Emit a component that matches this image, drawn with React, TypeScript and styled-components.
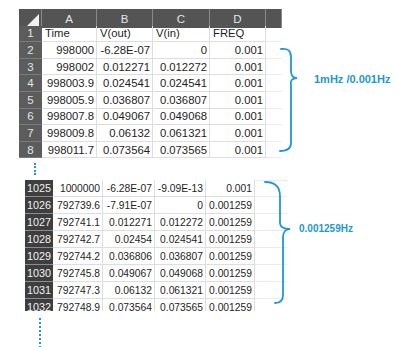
import styled, { createGlobalStyle } from 'styled-components'

const GlobalStyle = createGlobalStyle`
  html, body {
    margin: 0;
    background: #ffffff;
  }
  body {
    font-family: "Liberation Sans", Arial, sans-serif;
  }
`

const ACCENT = '#2196d8'

type Row = { n: string; cells: string[] }

const firstRows: Row[] = [
  { n: '2', cells: ['998000', '-6.28E-07', '0', '0.001'] },
  { n: '3', cells: ['998002', '0.012271', '0.012272', '0.001'] },
  { n: '4', cells: ['998003.9', '0.024541', '0.024541', '0.001'] },
  { n: '5', cells: ['998005.9', '0.036807', '0.036807', '0.001'] },
  { n: '6', cells: ['998007.8', '0.049067', '0.049068', '0.001'] },
  { n: '7', cells: ['998009.8', '0.06132', '0.061321', '0.001'] },
  { n: '8', cells: ['998011.7', '0.073564', '0.073565', '0.001'] },
]

const secondRows: Row[] = [
  { n: '1025', cells: ['1000000', '-6.28E-07', '-9.09E-13', '0.001'] },
  { n: '1026', cells: ['792739.6', '-7.91E-07', '0', '0.001259'] },
  { n: '1027', cells: ['792741.1', '0.012271', '0.012272', '0.001259'] },
  { n: '1028', cells: ['792742.7', '0.02454', '0.024541', '0.001259'] },
  { n: '1029', cells: ['792744.2', '0.036806', '0.036807', '0.001259'] },
  { n: '1030', cells: ['792745.8', '0.049067', '0.049068', '0.001259'] },
  { n: '1031', cells: ['792747.3', '0.06132', '0.061321', '0.001259'] },
  { n: '1032', cells: ['792748.9', '0.073564', '0.073565', '0.001259'] },
]

const Page = styled.main`
  padding-top: 9px;
  width: 399px;
  height: 347px;
  box-sizing: border-box;
  overflow: hidden;
`

const Block = styled.section<{ $indent: number; $top?: number }>`
  display: flex;
  align-items: flex-start;
  padding-left: ${(p) => p.$indent}px;
  margin-top: ${(p) => p.$top ?? 0}px;
`

const Sheet = styled.div<{ $cols: string; $rows: string; $height: number; $size: number }>`
  display: grid;
  grid-template-columns: ${(p) => p.$cols};
  grid-auto-rows: ${(p) => p.$rows};
  height: ${(p) => p.$height}px;
  overflow: hidden;
  font-size: ${(p) => p.$size}px;
  color: #1e1e1e;
`

const ColHead = styled.div`
  background: #545454;
  color: #e6e6e6;
  display: flex;
  align-items: center;
  justify-content: center;
  border-right: 1px solid #8a8a8a;
  font-size: 11.5px;
  height: 19px;
  &:last-child {
    border-right: none;
  }
`

const Corner = styled.div`
  background: #545454;
  height: 19px;
  border-right: 1px solid #8a8a8a;
  display: flex;
  align-items: flex-end;
  justify-content: flex-end;
  padding: 0 2px 2px 0;
  box-sizing: border-box;
`

const Triangle = styled.div`
  width: 0;
  height: 0;
  border-left: 12px solid transparent;
  border-bottom: 12px solid #f2f2f2;
`

const RowHead = styled.div<{ $dark?: boolean }>`
  background: ${(p) => (p.$dark ? '#3e3e3e' : '#5c5c5c')};
  color: ${(p) => (p.$dark ? '#f2f2f2' : '#e4e4e4')};
  display: flex;
  align-items: center;
  justify-content: center;
  border-bottom: 1px solid ${(p) => (p.$dark ? '#8c8c8c' : '#7a7a7a')};
  font-size: ${(p) => (p.$dark ? '10.8px' : '11.5px')};
`

const Cell = styled.div<{ $num?: boolean }>`
  display: flex;
  align-items: center;
  justify-content: ${(p) => (p.$num ? 'flex-end' : 'flex-start')};
  padding: 0 2px 0 3px;
  border-right: 1px solid #dedede;
  border-bottom: 1px solid #dedede;
  white-space: nowrap;
  overflow: hidden;
`

const Blank = styled.div<{ $top?: boolean }>`
  border-bottom: 1px solid #ececec;
  border-top: ${(p) => (p.$top ? '1px solid #ececec' : 'none')};
`

const Note = styled.div<{ $shift: number; $top: number }>`
  display: flex;
  align-items: flex-start;
  margin-left: ${(p) => p.$shift}px;
  margin-top: ${(p) => p.$top}px;
`

const Label = styled.span<{ $size: number; $top: number; $gap: number }>`
  color: ${ACCENT};
  font-weight: bold;
  font-size: ${(p) => p.$size}px;
  margin-top: ${(p) => p.$top}px;
  margin-left: ${(p) => p.$gap}px;
  white-space: nowrap;
`

const Dots = styled.div<{ $indent: number; $height: number; $top: number }>`
  margin-left: ${(p) => p.$indent}px;
  margin-top: ${(p) => p.$top}px;
  height: ${(p) => p.$height}px;
  border-left: 2px dotted ${ACCENT};
  width: 0;
`

function FirstBrace() {
  return (
    <svg width="22" height="106" viewBox="0 0 22 106" fill="none">
      <path
        d="M3 2 C10 1 13 4 13 10 L13 24 C13 28 14 31 19 31 C14 31 12 34 13 38 L13 96 C13 102 9 104 2 104"
        stroke={ACCENT}
        strokeWidth="1.8"
        strokeLinecap="round"
      />
    </svg>
  )
}

function SecondBrace() {
  return (
    <svg width="32" height="126" viewBox="0 0 32 126" fill="none">
      <path
        d="M3 2 C12 2 18 6 18 16 L18 43 C18 47 22 49 28 49 C24 49 21 52 21 57 L21 115 C21 120 18 123 13 123"
        stroke={ACCENT}
        strokeWidth="1.8"
        strokeLinecap="round"
      />
    </svg>
  )
}

export default function App() {
  return (
    <Page>
      <GlobalStyle />
      <Block $indent={19}>
        <Sheet $cols="23px 55px 56px 57px 56px 16px" $rows="16.6px" $height={151} $size={11.3}>
          <Corner>
            <Triangle />
          </Corner>
          {['A', 'B', 'C', 'D', ''].map((c, i) => (
            <ColHead key={i}>{c}</ColHead>
          ))}
          <RowHead>1</RowHead>
          <Cell>Time</Cell>
          <Cell>V(out)</Cell>
          <Cell>V(in)</Cell>
          <Cell>FREQ</Cell>
          <Blank />
          {firstRows.map((r) => [
            <RowHead key={r.n}>{r.n}</RowHead>,
            ...r.cells.map((c, i) => (
              <Cell key={r.n + '-' + i} $num>
                {c}
              </Cell>
            )),
            <Blank key={r.n + '-e'} />,
          ])}
        </Sheet>
        <Note $shift={-4} $top={38}>
          <FirstBrace />
          <Label $size={11} $top={26} $gap={14}>
            1mHz /0.001Hz
          </Label>
        </Note>
      </Block>
      <Dots $indent={34} $height={12} $top={3} />
      <Block $indent={25} $top={5}>
        <Sheet $cols="28px 50px 52px 51px 49px 32px" $rows="17px" $height={131} $size={10.3}>
          {secondRows.map((r, ri) => [
            <RowHead key={r.n} $dark>
              {r.n}
            </RowHead>,
            ...r.cells.map((c, i) => (
              <Cell key={r.n + '-' + i} $num>
                {c}
              </Cell>
            )),
            <Blank key={r.n + '-e'} $top={ri === 0} />,
          ])}
        </Sheet>
        <Note $shift={-25} $top={0}>
          <SecondBrace />
          <Label $size={10} $top={43} $gap={5}>
            0.001259Hz
          </Label>
        </Note>
      </Block>
      <Dots $indent={39} $height={30} $top={7} />
    </Page>
  )
}
